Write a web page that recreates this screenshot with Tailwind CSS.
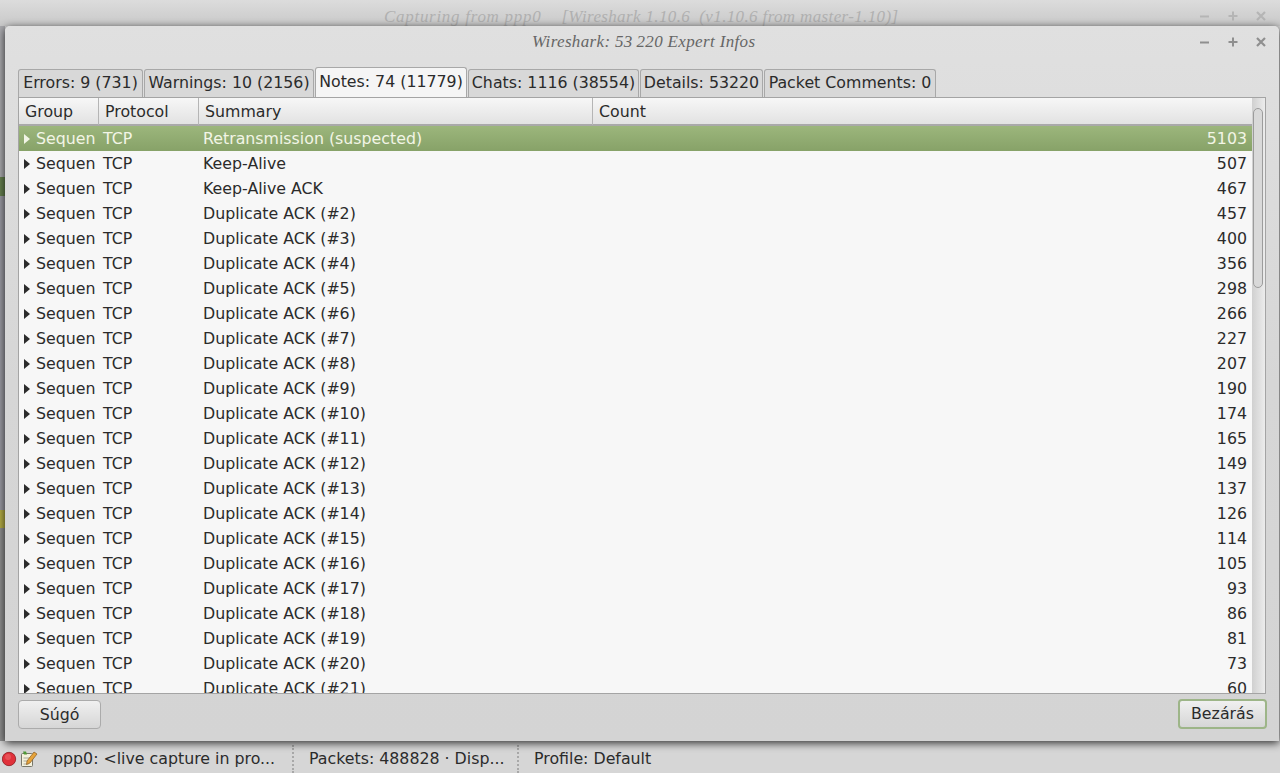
<!DOCTYPE html>
<html lang="en">
<head>
    <meta charset="UTF-8" />
    <meta name="viewport" content="width=device-width, initial-scale=1.0" />
    <title>Wireshark: 53 220 Expert Infos</title>
    <script src="https://cdn.jsdelivr.net/npm/@tailwindcss/browser@4"></script>
</head>
<body class="h-[773px] w-[1280px] overflow-hidden bg-[#d6d6d6] font-['DejaVu_Sans',sans-serif] text-[15.8px] text-[#2b2b2b]">

<!-- main window behind the dialog -->
<header class="relative h-[26px] bg-gradient-to-b from-[#dcdcdc] to-[#c9c9c9]">
    <div class="absolute left-[384px] top-[4px] whitespace-nowrap font-['Liberation_Serif',serif] text-[17px] italic text-[#b0b0b0]"><span class="tracking-[0.71px]">Capturing from ppp0</span><span class="ml-[20px] tracking-[0.36px]">[Wireshark 1.10.6 &nbsp;(v1.10.6 from master-1.10)]</span></div>
    <div class="absolute left-[1199px] top-[10px] flex gap-[16px] text-[#b5b5b5]">
        <svg class="h-3 w-3" viewBox="0 0 12 12"><path d="M1 6.5h9" stroke="currentColor" stroke-width="2" /></svg>
        <svg class="h-3 w-3" viewBox="0 0 12 12"><path d="M1.5 6h9M6 1.5v9" stroke="currentColor" stroke-width="2" /></svg>
        <svg class="h-3 w-3" viewBox="0 0 12 12"><path d="M2 2l8 8M10 2l-8 8" stroke="currentColor" stroke-width="2.2" /></svg>
    </div>
</header>

<div class="flex h-[715px]">
    <!-- sliver of the main window left of the dialog -->
    <div class="flex w-[5px] flex-col bg-[#a0a0a6]">
        <div class="h-[151px] bg-[#a9a9ad]"></div>
        <div class="h-[19px] bg-[#66804f]"></div>
        <div class="h-[314px] bg-[#9a9aa2]"></div>
        <div class="h-[18px] bg-[#b5ad45]"></div>
        <div class="flex-1 bg-[#8f8f8f]"></div>
    </div>

    <!-- dialog -->
    <main class="relative z-10 flex h-full w-[1274px] flex-col rounded-t-[5px] bg-gradient-to-b from-[#e0e0e0] via-[#d6d6d6] to-[#d4d4d4] shadow-[0_2px_8px_rgba(0,0,0,0.8)]">
        <div class="relative h-[41px] shrink-0">
            <div class="absolute left-[527px] top-[3px] whitespace-nowrap font-['Liberation_Serif',serif] text-[17px] italic tracking-[0.35px] text-[#666]">Wireshark: 53&thinsp;220 Expert Infos</div>
            <div class="absolute left-[1194px] top-[10px] flex gap-[16px] text-[#8f8f8f]">
                <svg class="h-3 w-3" viewBox="0 0 12 12"><path d="M1 6.5h9" stroke="currentColor" stroke-width="2" /></svg>
                <svg class="h-3 w-3" viewBox="0 0 12 12"><path d="M1.5 6h9M6 1.5v9" stroke="currentColor" stroke-width="2" /></svg>
                <svg class="h-3 w-3" viewBox="0 0 12 12"><path d="M2 2l8 8M10 2l-8 8" stroke="currentColor" stroke-width="2.2" /></svg>
            </div>
        </div>

        <!-- tabs -->
        <div class="ml-[13px] flex h-[30px] shrink-0 items-end gap-px">
            <div class="flex h-[28px] w-[125px] items-center justify-center rounded-t-[3px] border border-b-0 border-[#a8a8a8] bg-[#d8d8d8] pb-[2px] whitespace-nowrap">Errors: 9 (731)</div>
            <div class="flex h-[28px] w-[170px] items-center justify-center rounded-t-[3px] border border-b-0 border-[#a8a8a8] bg-[#d8d8d8] pb-[2px] whitespace-nowrap">Warnings: 10 (2156)</div>
            <div class="relative z-10 flex h-[30px] w-[152px] items-center justify-center rounded-t-[3px] border border-b-0 border-[#a8a8a8] bg-[#f5f5f5] pb-[2px] whitespace-nowrap">Notes: 74 (11779)</div>
            <div class="flex h-[28px] w-[171px] items-center justify-center rounded-t-[3px] border border-b-0 border-[#a8a8a8] bg-[#d8d8d8] pb-[2px] whitespace-nowrap">Chats: 1116 (38554)</div>
            <div class="flex h-[28px] w-[123px] items-center justify-center rounded-t-[3px] border border-b-0 border-[#a8a8a8] bg-[#d8d8d8] pb-[2px] whitespace-nowrap">Details: 53220</div>
            <div class="flex h-[28px] w-[172px] items-center justify-center rounded-t-[3px] border border-b-0 border-[#a8a8a8] bg-[#d8d8d8] pb-[2px] whitespace-nowrap">Packet Comments: 0</div>
        </div>

        <!-- tree view -->
        <div class="ml-[13px] flex h-[597px] w-[1248px] shrink-0 border border-[#a4a4a4] bg-[#f7f7f7]">
            <div class="min-w-0 flex-1 overflow-hidden">
                <div class="grid h-[28px] grid-cols-[80px_100px_394px_1fr] border-b-2 border-[#a9a9a9] bg-gradient-to-b from-[#f7f7f7] to-[#e2e2e2] leading-[27px]">
                    <div class="border-r border-[#b5b5b5] pl-[6px]">Group</div>
                    <div class="border-r border-[#b5b5b5] pl-[6px]">Protocol</div>
                    <div class="border-r border-[#b5b5b5] pl-[6px]">Summary</div>
                    <div class="pl-[6px]">Count</div>
                </div>
                <div id="rows"></div>
            </div>
            <!-- scrollbar -->
            <div class="w-[13px] shrink-0 bg-gradient-to-r from-[#d0d0d0] to-[#ececec] pl-px pt-[10px]">
                <div class="h-[180px] w-[10px] rounded-[5px] border border-[#9c9c9c] bg-[#d9d9d9]"></div>
            </div>
        </div>

        <!-- buttons -->
        <div class="ml-[13px] mt-[5px] flex w-[1249px] items-start justify-between">
            <button class="mt-px h-[29px] w-[83px] rounded-[4px] border border-[#ababab] bg-gradient-to-b from-[#f0f0f0] to-[#d6d6d6]">Súgó</button>
            <button class="h-[30px] w-[89px] rounded-[4px] border-2 border-[#9db588] bg-gradient-to-b from-[#f0f0f0] to-[#d6d6d6]">Bezárás</button>
        </div>
    </main>
</div>

<!-- status bar of the main window -->
<footer class="flex h-[32px] items-center bg-[#d6d6d6] pt-[3px]">
    <svg class="ml-[2px] h-4 w-4 shrink-0" viewBox="0 0 16 16"><circle cx="7" cy="8" r="6.7" fill="#e0313a" stroke="#8c1b20" stroke-width="0.8" /><circle cx="6" cy="6" r="3" fill="#f07a7c" opacity="0.45" /></svg>
    <svg class="ml-[2px] h-[18px] w-[18px] shrink-0" viewBox="0 0 18 18">
        <rect x="1.5" y="3.5" width="11" height="13" rx="1" fill="#f4f1dc" stroke="#77776a" />
        <path d="M3 1.500h3l1 3h-3z" fill="#4f9a36" />
        <path d="M3.500 8h7M3.500 11h7M3.500 14h5" stroke="#a6a69a" />
        <path d="M7 11l7-9 3 2-7 9-3.500 1.500z" fill="#e6a33a" stroke="#8a5a20" stroke-width="0.7" />
    </svg>
    <div class="ml-[15px] w-[239px] whitespace-nowrap">ppp0: &lt;live capture in pro...</div>
    <div class="h-[28px] border-l-2 border-dotted border-[#a8a8a8]"></div>
    <div class="ml-[15px] w-[208px] whitespace-nowrap">Packets: 488828 · Disp...</div>
    <div class="h-[28px] border-l-2 border-dotted border-[#a8a8a8]"></div>
    <div class="ml-[15px] whitespace-nowrap">Profile: Default</div>
</footer>

<script>
const data = [
    ['Retransmission (suspected)', 5103], ['Keep-Alive', 507], ['Keep-Alive ACK', 467],
    ['Duplicate ACK (#2)', 457], ['Duplicate ACK (#3)', 400], ['Duplicate ACK (#4)', 356],
    ['Duplicate ACK (#5)', 298], ['Duplicate ACK (#6)', 266], ['Duplicate ACK (#7)', 227],
    ['Duplicate ACK (#8)', 207], ['Duplicate ACK (#9)', 190], ['Duplicate ACK (#10)', 174],
    ['Duplicate ACK (#11)', 165], ['Duplicate ACK (#12)', 149], ['Duplicate ACK (#13)', 137],
    ['Duplicate ACK (#14)', 126], ['Duplicate ACK (#15)', 114], ['Duplicate ACK (#16)', 105],
    ['Duplicate ACK (#17)', 93], ['Duplicate ACK (#18)', 86], ['Duplicate ACK (#19)', 81],
    ['Duplicate ACK (#20)', 73], ['Duplicate ACK (#21)', 60]
];

document.getElementById('rows').innerHTML = data.map((row, i) => `
    <div class="grid h-[25px] grid-cols-[80px_100px_394px_1fr] leading-[25px] ${i === 0 ? 'bg-gradient-to-b from-[#9cb67c] to-[#87a268] text-[#f2f5e6]' : ''}">
        <div class="flex items-center overflow-hidden pl-[5px]">
            <svg class="h-[10px] w-[6px] shrink-0" viewBox="0 0 6 10"><path d="M0 0l6 5-6 5z" fill="${i === 0 ? '#f2f5e6' : '#2b2b2b'}" /></svg>
            <span class="ml-[6px] whitespace-nowrap">Sequen</span>
        </div>
        <div class="pl-[4px]">TCP</div>
        <div class="pl-[4px]">${row[0]}</div>
        <div class="pr-[5px] text-right">${row[1]}</div>
    </div>
`).join('');
</script>
</body>
</html>
